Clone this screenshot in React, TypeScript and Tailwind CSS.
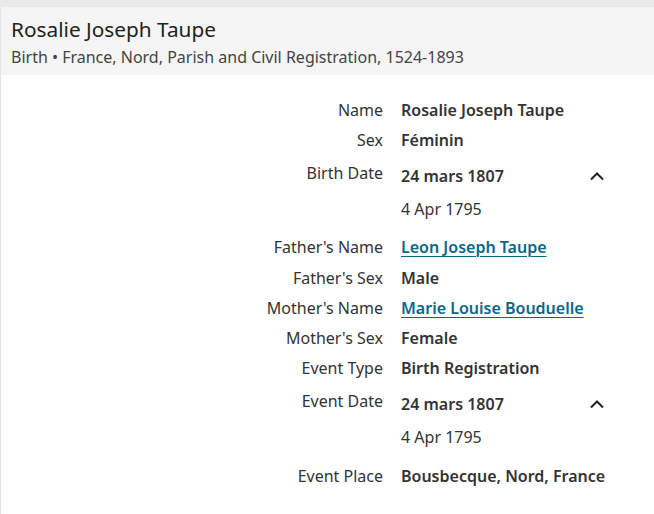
import React from "react";

function Chevron() {
  return (
    <svg width="14" height="9" viewBox="0 0 14 9" fill="none" className="block">
      <path d="M1 7.5 L7 1.5 L13 7.5" stroke="#222" strokeWidth="2" strokeLinecap="butt" strokeLinejoin="miter" />
    </svg>
  );
}

function Row({ label, children, h = "h-[30px]" }: { label: string; children: React.ReactNode; h?: string }) {
  return (
    <div className={`flex items-center ${h}`}>
      <div className="w-[382px] shrink-0 text-right text-[#333]">{label}</div>
      <div className="ml-[18px] font-semibold text-[#333]">{children}</div>
    </div>
  );
}

function DateRow({ label, value, alt, pb = "pb-[11px]" }: { label: string; value: string; alt: string; pb?: string }) {
  return (
    <div className={`flex pt-[9px] ${pb}`}>
      <div className="w-[382px] shrink-0 text-right text-[#333] leading-[24px] -mt-[3px]">{label}</div>
      <div className="ml-[18px] w-[203px]">
        <div className="flex items-center justify-between leading-[24px]">
          <span className="font-semibold text-[#333]">{value}</span>
          <span><Chevron /></span>
        </div>
        <div className="mt-[9px] leading-[24px] text-[#333]">{alt}</div>
      </div>
    </div>
  );
}

export default function App() {
  return (
    <div
      className="w-[654px] h-[514px] bg-[#e9eaea] pt-[7px] text-[16px]"
      style={{ fontFamily: '"Noto Sans", "Open Sans", sans-serif' }}
    >
      <div className="h-[507px] bg-white border-l border-[#e4e4e4]">
        <div className="h-[68px] bg-[#f5f5f5] pl-[10px] pt-[8px]">
          <div className="text-[20.8px] leading-[29px] text-[#222]">Rosalie Joseph Taupe</div>
          <div className="text-[16px] leading-[22px] text-[#444] mt-[2px]">
            Birth • France, Nord, Parish and Civil Registration, 1524-1893
          </div>
        </div>
        <div className="pt-[20px]">
          <Row label="Name">Rosalie Joseph Taupe</Row>
          <Row label="Sex">Féminin</Row>
          <DateRow label="Birth Date" value="24 mars 1807" alt="4 Apr 1795" />
          <Row label="Father's Name">
            <a href="#" className="text-[#0b6688] underline underline-offset-[3px] decoration-1">Leon Joseph Taupe</a>
          </Row>
          <Row label="Father's Sex" h="h-[31px]">Male</Row>
          <Row label="Mother's Name">
            <a href="#" className="text-[#0b6688] underline underline-offset-[3px] decoration-1">Marie Louise Bouduelle</a>
          </Row>
          <Row label="Mother's Sex">Female</Row>
          <Row label="Event Type">Birth Registration</Row>
          <DateRow label="Event Date" value="24 mars 1807" alt="4 Apr 1795" pb="pb-[12px]" />
          <Row label="Event Place">Bousbecque, Nord, France</Row>
        </div>
      </div>
    </div>
  );
}
